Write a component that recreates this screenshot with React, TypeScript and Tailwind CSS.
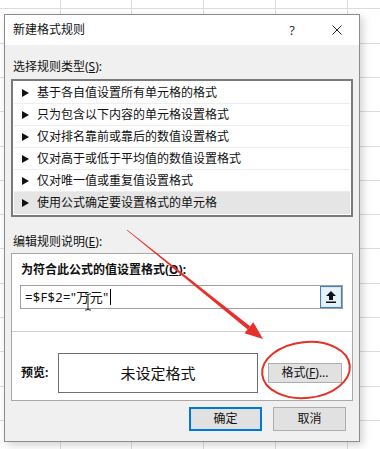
import React from "react";

const items = [
  "基于各自值设置所有单元格的格式",
  "只为包含以下内容的单元格设置格式",
  "仅对排名靠前或靠后的数值设置格式",
  "仅对高于或低于平均值的数值设置格式",
  "仅对唯一值或重复值设置格式",
  "使用公式确定要设置格式的单元格",
];

const vLines = [60.5, 131.5, 203.5, 275.5, 347.5];
const hLines = [8.5, 43.5, 77.5, 111.5, 146.5, 180.5, 214.5, 248.5, 283.5, 317.5, 351.5, 386.5, 420.5];

function Tri() {
  return (
    <svg width="7" height="8" viewBox="0 0 7 8" className="shrink-0">
      <polygon points="0,0 7,4 0,8" fill="#111" />
    </svg>
  );
}

export default function App() {
  return (
    <div
      className="relative w-[380px] h-[449px] overflow-hidden bg-white text-[12px] text-[#111]"
      style={{ fontFamily: '"Noto Sans", "Noto Sans CJK SC", sans-serif' }}
    >
      {/* spreadsheet grid */}
      <svg className="absolute inset-0" width="380" height="449">
        {vLines.map((x) => (
          <line key={"v" + x} x1={x} y1={0} x2={x} y2={449} stroke="#dcdcdc" strokeWidth="1" />
        ))}
        {hLines.map((y) => (
          <line key={"h" + y} x1={0} y1={y} x2={380} y2={y} stroke="#dcdcdc" strokeWidth="1" />
        ))}
      </svg>

      {/* dialog */}
      <div className="absolute left-[4px] top-[14px] w-[356px] h-[428px] border border-[#8c8c8c] bg-[#f0f0f0] shadow-[3px_3px_8px_rgba(0,0,0,0.18)] flex flex-col">
        {/* title bar */}
        <div className="h-[30px] bg-white flex items-center pl-[8px] pr-[17px] shrink-0">
          <span className="flex-1 leading-[16px]">新建格式规则</span>
          <span className="w-[14px] text-center text-[13px] text-[#333] leading-[16px]">?</span>
          <svg width="10" height="10" viewBox="0 0 10 10" className="ml-[33px]">
            <line x1="0.5" y1="0.5" x2="9.5" y2="9.5" stroke="#222" strokeWidth="1" />
            <line x1="9.5" y1="0.5" x2="0.5" y2="9.5" stroke="#222" strokeWidth="1" />
          </svg>
        </div>

        {/* body */}
        <div className="flex flex-col pl-[6px] pr-[6px]">
          <div className="mt-[14px] h-[16px] leading-[16px] pl-[2px]">
            选择规则类型(<span className="underline">S</span>):
          </div>
          <div className="mt-[4px] w-[342px] border-2 border-[#7a7a7a] bg-white p-[1px]">
            {items.map((t, i) => (
              <div
                key={t}
                className={
                  "h-[22px] flex items-center gap-[8px] pl-[8px] " +
                  (i === 5 ? "bg-[#e5e5e5]" : "border-b border-[#eeeeee]")
                }
              >
                <Tri />
                <span className="leading-[16px]">{t}</span>
              </div>
            ))}
          </div>

          <div className="mt-[17px] h-[16px] leading-[16px] pl-[2px]">
            编辑规则说明(<span className="underline">E</span>):
          </div>

          <div className="mt-[3px] w-[342px] h-[148px] border border-[#a8a8a8] bg-white flex flex-col">
            <div className="mt-[8px] pl-[9px] h-[16px] leading-[16px] font-bold">
              为符合此公式的值设置格式(<span className="underline">O</span>):
            </div>
            <div className="mt-[7px] ml-[8px] w-[323px] h-[24px] border border-[#a0a0a0] flex items-center relative">
              <span className="pl-[4px] text-[13px] leading-[18px] tracking-[0.3px]">=$F$2="万元"</span>
              <span className="w-[1px] h-[16px] bg-black ml-[1px]" />
              <div className="ml-auto mr-[0px] w-[22px] h-[22px] border border-[#4a7fb0] bg-[#e5f1fb] flex items-center justify-center shadow-[inset_0_0_0_1px_#d6ebfa]">
                <svg width="10" height="12" viewBox="0 0 10 12">
                  <polygon points="5,0 10,5 7,5 7,9 3,9 3,5 0,5" fill="#111" />
                  <rect x="0" y="10.5" width="10" height="1.5" fill="#111" />
                </svg>
              </div>
              {/* I-beam mouse cursor */}
              <svg width="8" height="18" viewBox="0 0 8 18" className="absolute left-[63px] top-[7px]">
                <path d="M1 1 H3 L4 2 L5 1 H7 M4 2 V16 M1 17 H3 L4 16 L5 17 H7" stroke="#222" strokeWidth="1" fill="none" />
              </svg>
            </div>
            <div className="mt-[22px] h-[1px] bg-[#d0d0d0]" />
            <div className="mt-[21px] flex items-center pl-[9px]">
              <span className="font-bold w-[37px] leading-[16px]">预览:</span>
              <div className="w-[200px] h-[40px] border border-[#6f6f6f] flex items-center justify-center text-[15px]">
                未设定格式
              </div>
              <div className="ml-[10px] w-[74px] h-[20px] border border-[#adadad] bg-[#e1e1e1] flex items-center justify-center leading-[16px]">
                格式(<span className="underline">F</span>)...
              </div>
            </div>
          </div>

          <div className="mt-[6px] flex justify-end pr-[7px] gap-[11px]">
            <div className="w-[73px] h-[24px] border-2 border-[#0078d7] bg-[#e1e1e1] flex items-center justify-center leading-[16px]">
              确定
            </div>
            <div className="w-[73px] h-[24px] border border-[#adadad] bg-[#e1e1e1] flex items-center justify-center leading-[16px]">
              取消
            </div>
          </div>
        </div>
      </div>

      {/* annotations */}
      <svg className="absolute inset-0 pointer-events-none" width="380" height="449">
        <polygon
          points="126.8,230.3 127.2,229.7 250.1,326.2 247.7,329.4"
          fill="#e8302a"
        />
        <polygon points="263,339 244.5,333.3 253.3,322.3" fill="#e8302a" />
        <ellipse
          cx="306"
          cy="370"
          rx="44"
          ry="28"
          fill="none"
          stroke="#e53227"
          strokeWidth="2"
          transform="rotate(-6 306 370)"
        />
      </svg>
    </div>
  );
}
